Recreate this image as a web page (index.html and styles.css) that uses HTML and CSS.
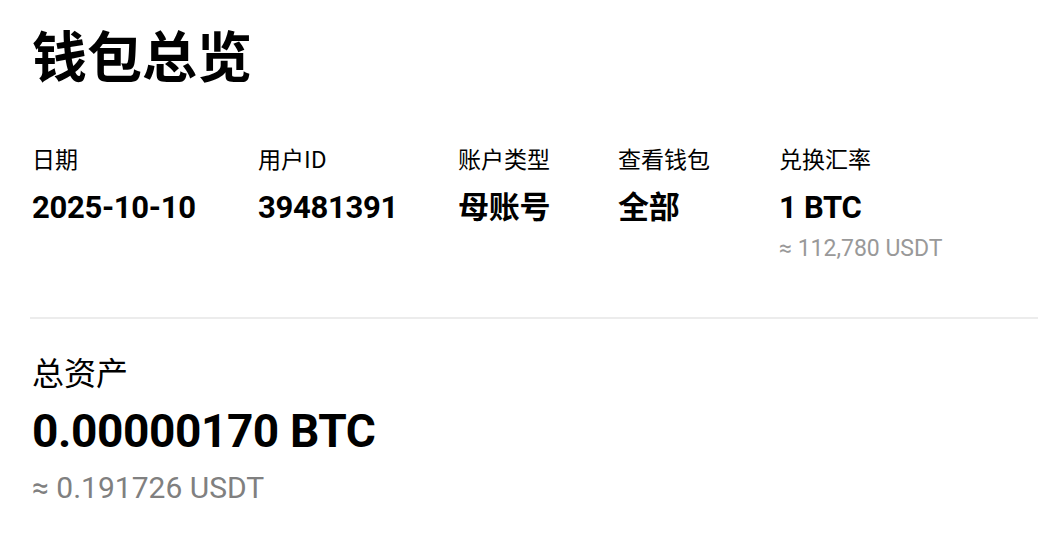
FILE: index.html
```html
<!DOCTYPE html>
<html lang="zh-CN">
<head>
    <meta charset="utf-8" />
    <title>钱包总览</title>
    <link rel="stylesheet" href="styles.css">
</head>
<body>

    <div id="header">
        <h1>钱包总览</h1>
    </div>

    <div class="info">
        <div class="item">
            <div class="label">日期</div>
            <div class="value">2025-10-10</div>
        </div>
        <div class="item">
            <div class="label">用户ID</div>
            <div class="value">39481391</div>
        </div>
        <div class="item">
            <div class="label">账户类型</div>
            <div class="value">母账号</div>
        </div>
        <div class="item">
            <div class="label">查看钱包</div>
            <div class="value">全部</div>
        </div>
        <div class="item">
            <div class="label">兑换汇率</div>
            <div class="value">1 BTC</div>
            <div class="sub">≈ 112,780 USDT</div>
        </div>
    </div>

    <div class="total">
        <div class="total-label">总资产</div>
        <div class="total-value">0.00000170 BTC</div>
        <div class="total-sub">≈ 0.191726 USDT</div>
    </div>

</body>
</html>
```

FILE: styles.css
```css
body {
    background: #fff;
    color: #000;
    font-family: Roboto, 'Noto Sans CJK SC', sans-serif;
    margin: 0;
    padding: 0 0 0 30px;
}

#header {
    padding: 15px 0 0 2px;
}

h1 {
    font-family: 'Noto Sans CJK SC', sans-serif;
    font-size: 55px;
    font-weight: bold;
    line-height: 76px;
    margin: 0;
}

.info {
    display: grid;
    grid-template-columns: 226px 200px 160px 161px auto;
    padding: 51px 0 0 2px;
}

    .info .label {
        font-family: 'Noto Sans CJK SC', sans-serif;
        font-size: 23px;
        line-height: 32px;
    }

    .info .value {
        font-size: 31px;
        font-weight: bold;
        line-height: 46px;
        margin-top: 11px;
        letter-spacing: -0.3px;
    }

    .info .sub {
        color: #999;
        font-size: 23px;
        line-height: 32px;
        margin-top: 2px;
    }

.total {
    border-top: 2px solid #ececec;
    margin-top: 52px;
    padding: 31px 0 0 2px;
}

.total-label {
    font-family: 'Noto Sans CJK SC', sans-serif;
    font-size: 32px;
    line-height: 42px;
}

.total-value {
    font-size: 46px;
    font-weight: bold;
    line-height: 62px;
    margin-top: 8px;
    letter-spacing: -0.4px;
}

.total-sub {
    color: #808080;
    font-size: 30px;
    line-height: 40px;
    margin-top: 6px;
}
```
